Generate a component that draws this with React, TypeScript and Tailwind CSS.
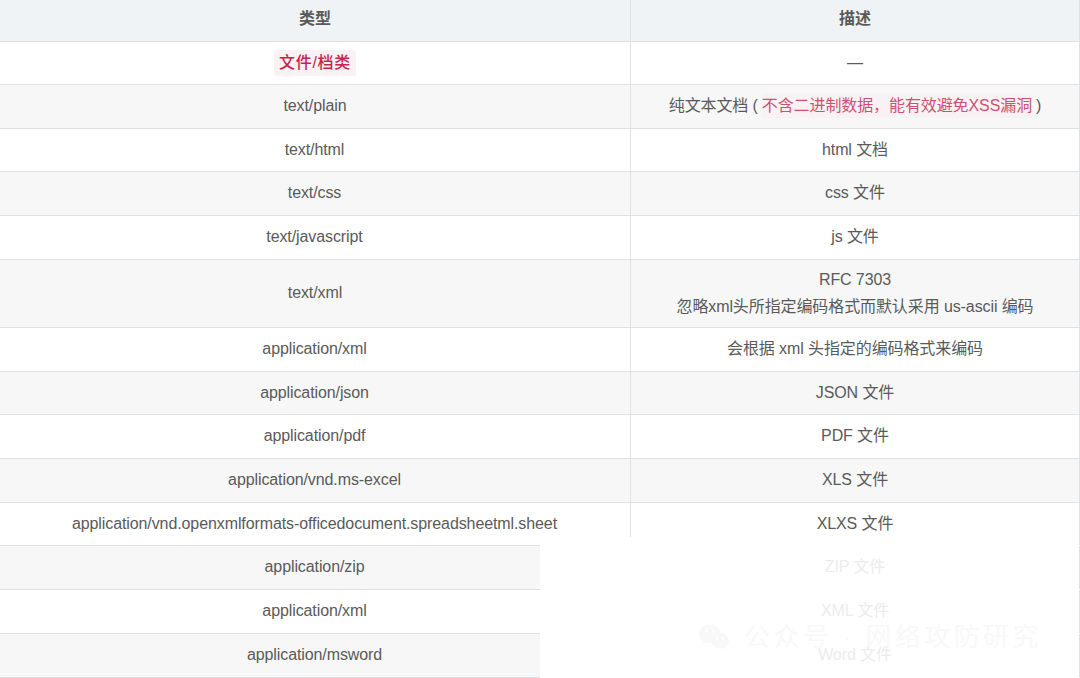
import { SiWechat } from "react-icons/si";

const FONT = "font-['Liberation_Sans','Noto_Sans_CJK_SC',sans-serif]";

interface Row {
  type: string;
  desc: string;
  h: string;
}

// 前半部分，水印上方
const rows: Row[] = [
  { type: "text/html", desc: "html 文档", h: "h-[43.5px]" },
  { type: "text/css", desc: "css 文件", h: "h-[43.5px]" },
  { type: "text/javascript", desc: "js 文件", h: "h-[44px]" },
];

const rowsAfter: Row[] = [
  { type: "application/xml", desc: "会根据 xml 头指定的编码格式来编码", h: "h-[44px]" },
  { type: "application/json", desc: "JSON 文件", h: "h-[43.5px]" },
  { type: "application/pdf", desc: "PDF 文件", h: "h-[43.5px]" },
  { type: "application/vnd.ms-excel", desc: "XLS 文件", h: "h-[44px]" },
  {
    type: "application/vnd.openxmlformats-officedocument.spreadsheetml.sheet",
    desc: "XLXS 文件",
    h: "h-[43.5px]",
  },
];

const fadedRows: Row[] = [
  { type: "application/zip", desc: "ZIP 文件", h: "h-[43.5px]" },
  { type: "application/xml", desc: "XML 文件", h: "h-[44px]" },
  { type: "application/msword", desc: "Word 文件", h: "h-[44px]" },
];

function Cells({ type, desc, h, bg, faded }: Row & { bg: string; faded?: boolean }) {
  return (
    <div className={`grid grid-cols-[631px_449px] border-b border-[#dfe2e5] ${h} ${bg}`}>
      <div className="flex items-center justify-center border-r border-[#dfe2e5] pr-px">{type}</div>
      <div
        className={`relative z-10 flex items-center justify-center border-r border-[#dfe2e5] ${
          faded ? "text-[#ececec]" : ""
        }`}
      >
        {desc}
      </div>
    </div>
  );
}

export default function App() {
  return (
    <div
      className={`relative h-[678px] w-[1080px] overflow-hidden bg-white text-base tracking-[-0.1px] text-[#5a5a5a] ${FONT}`}
    >
      <div className="grid h-[41.5px] grid-cols-[631px_449px] border-b border-[#dfe2e5] bg-[#f0f3f6] font-bold">
        <div className="flex items-center justify-center border-r border-[#dfe2e5] pb-[3px]">类型</div>
        <div className="flex items-center justify-center border-r border-[#dfe2e5] pb-[3px]">描述</div>
      </div>

      <div className="grid h-[43px] grid-cols-[631px_449px] border-b border-[#dfe2e5] bg-white">
        <div className="flex items-center justify-center border-r border-[#dfe2e5]">
          <span className="rounded-[3px] bg-[#f9f2f4] px-[5px] py-px font-medium tracking-[0.7px] text-[#c7254e]">
            文件/档类
          </span>
        </div>
        <div className="flex items-center justify-center border-r border-[#dfe2e5]">—</div>
      </div>

      <div className="grid h-[44px] grid-cols-[631px_449px] border-b border-[#dfe2e5] bg-[#f7f7f7]">
        <div className="flex items-center justify-center border-r border-[#dfe2e5]">text/plain</div>
        <div className="flex items-center justify-center border-r border-[#dfe2e5]">
          纯文本文档 (
          <span className="mx-1 rounded-[3px] bg-[#f9f2f4] text-[#c7254e] opacity-80">
            不含二进制数据，能有效避免XSS漏洞
          </span>
          )
        </div>
      </div>

      {rows.map((r, i) => (
        <Cells key={r.type} {...r} bg={i % 2 === 0 ? "bg-white" : "bg-[#f7f7f7]"} />
      ))}

      <div className="grid h-[68px] grid-cols-[631px_449px] border-b border-[#dfe2e5] bg-[#f7f7f7]">
        <div className="flex items-center justify-center border-r border-[#dfe2e5]">text/xml</div>
        <div className="flex flex-col items-center justify-center gap-[3px] border-r border-[#dfe2e5]">
          <div>RFC 7303</div>
          <div>忽略xml头所指定编码格式而默认采用 us-ascii 编码</div>
        </div>
      </div>

      {rowsAfter.map((r, i) => (
        <Cells key={r.type} {...r} bg={i % 2 === 0 ? "bg-white" : "bg-[#f7f7f7]"} />
      ))}

      {fadedRows.map((r, i) => (
        <Cells key={r.desc} {...r} faded bg={i % 2 === 0 ? "bg-[#f7f7f7]" : "bg-white"} />
      ))}

      {/* 水印遮挡 */}
      <div className="absolute left-[540px] top-[537px] h-[141px] w-[540px] bg-white">
        <div className="absolute left-[155px] top-[85px] flex items-center gap-[11px] text-[#f8f8f8]">
          <SiWechat className="h-[30px] w-[38px]" />
          <span className="text-[26px] leading-none tracking-[3.4px]">公众号 · 网络攻防研究</span>
        </div>
      </div>
    </div>
  );
}
